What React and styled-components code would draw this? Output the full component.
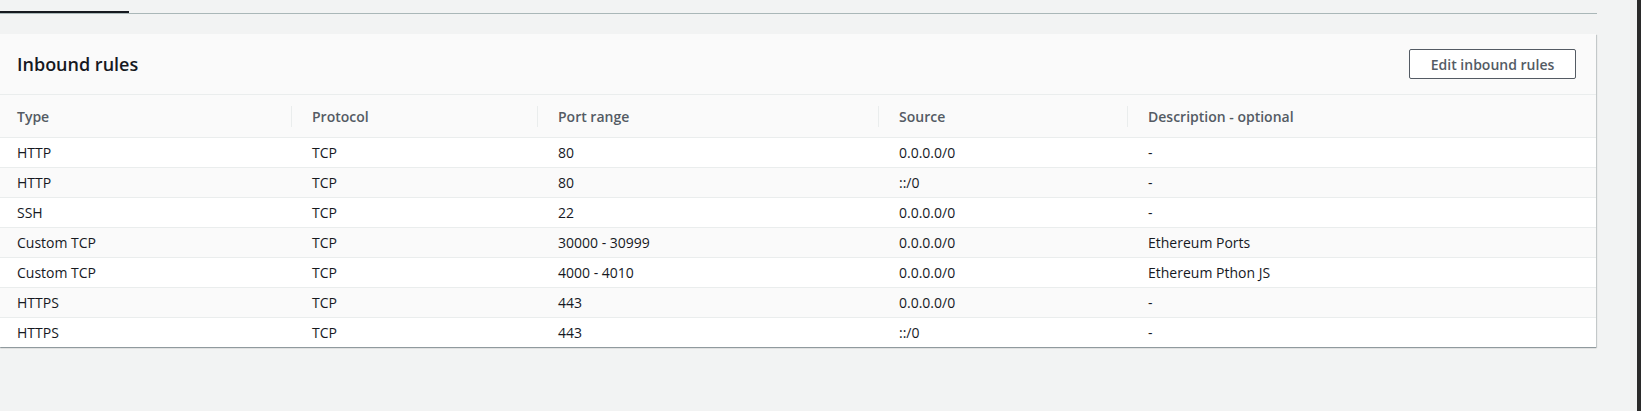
import React from 'react';
import styled, { createGlobalStyle } from 'styled-components';

const GlobalStyle = createGlobalStyle`
  html, body {
    margin: 0;
    padding: 0;
    background: #f2f3f3;
    font-family: "Open Sans", "Noto Sans", Arial, sans-serif;
    color: #16191f;
  }
`;

const Page = styled.div`
  display: flex;
  height: 411px;
  overflow: hidden;
`;

const Main = styled.div`
  width: 1597px;
  display: flex;
  flex-direction: column;
`;

const ScrollStrip = styled.div`
  margin-left: auto;
  width: 4px;
  background: #2b2b2b;
`;

const TabBar = styled.div`
  height: 13px;
  border-bottom: 1px solid #aab7b8;
  display: flex;
  align-items: flex-end;
`;

const ActiveTab = styled.div`
  width: 129px;
  height: 2px;
  background: #16191f;
`;

const Card = styled.section`
  margin-top: 20px;
  width: 1596px;
  background: #ffffff;
  box-shadow: 0 1px 1px 0 rgba(0, 28, 36, 0.3), 1px 1px 1px 0 rgba(0, 28, 36, 0.15);
`;

const CardHeader = styled.header`
  display: flex;
  align-items: center;
  justify-content: space-between;
  height: 60px;
  padding: 0 20px 0 17px;
  background: #fafafa;
  border-bottom: 1px solid #eaeded;
`;

const Title = styled.h2`
  margin: 0;
  font-size: 18px;
  font-weight: 600;
  color: #16191f;
`;

const Button = styled.button`
  width: 167px;
  height: 30px;
  border: 1px solid #545b64;
  border-radius: 2px;
  background: #ffffff;
  color: #545b64;
  font-family: inherit;
  font-size: 14px;
  font-weight: 600;
  cursor: pointer;
`;

const Row = styled.div`
  display: grid;
  grid-template-columns: 291px 246px 341px 249px 1fr;
  height: ${(p) => (p.$head ? '42px' : '29px')};
  align-items: center;
  background: ${(p) => (p.$shade ? '#fafafa' : '#ffffff')};
  border-bottom: ${(p) => (p.$last ? 'none' : '1px solid #eaeded')};
  font-size: 14px;
`;

const HeadCell = styled.div`
  display: flex;
  align-items: center;
  height: 21px;
  padding-left: ${(p) => (p.$first ? '17px' : '20px')};
  border-left: ${(p) => (p.$first ? 'none' : '1px solid #eaeded')};
  font-weight: 600;
  color: #545b64;
`;

const Cell = styled.div`
  padding-left: ${(p) => (p.$first ? '17px' : '21px')};
  color: #16191f;
  white-space: nowrap;
`;

const columns = ['Type', 'Protocol', 'Port range', 'Source', 'Description - optional'];

const rules = [
  ['HTTP', 'TCP', '80', '0.0.0.0/0', '-'],
  ['HTTP', 'TCP', '80', '::/0', '-'],
  ['SSH', 'TCP', '22', '0.0.0.0/0', '-'],
  ['Custom TCP', 'TCP', '30000 - 30999', '0.0.0.0/0', 'Ethereum Ports'],
  ['Custom TCP', 'TCP', '4000 - 4010', '0.0.0.0/0', 'Ethereum Pthon JS'],
  ['HTTPS', 'TCP', '443', '0.0.0.0/0', '-'],
  ['HTTPS', 'TCP', '443', '::/0', '-'],
];

export default function App() {
  return (
    <Page>
      <GlobalStyle />
      <Main>
        <TabBar>
          <ActiveTab />
        </TabBar>
        <Card>
          <CardHeader>
            <Title>Inbound rules</Title>
            <Button>Edit inbound rules</Button>
          </CardHeader>
          <Row $head $shade>
            {columns.map((c, i) => (
              <HeadCell key={c} $first={i === 0}>{c}</HeadCell>
            ))}
          </Row>
          {rules.map((r, i) => (
            <Row key={i} $shade={i % 2 === 1} $last={i === rules.length - 1}>
              {r.map((v, j) => (
                <Cell key={j} $first={j === 0}>{v}</Cell>
              ))}
            </Row>
          ))}
        </Card>
      </Main>
      <ScrollStrip />
    </Page>
  );
}
